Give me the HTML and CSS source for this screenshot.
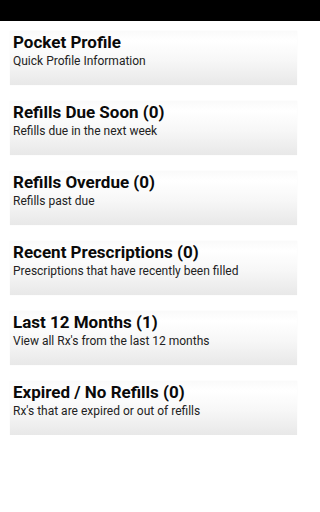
FILE: index.html
```html
<!DOCTYPE html>
<html>
<head>
<meta charset="utf-8">
<link rel="stylesheet" href="styles.css">
</head>
<body>
<div class="status"></div>
<div class="list">
  <div class="card"><div class="title">Pocket Profile</div><div class="sub">Quick Profile Information</div></div>
  <div class="card"><div class="title">Refills Due Soon (0)</div><div class="sub">Refills due in the next week</div></div>
  <div class="card"><div class="title">Refills Overdue (0)</div><div class="sub">Refills past due</div></div>
  <div class="card"><div class="title">Recent Prescriptions (0)</div><div class="sub">Prescriptions that have recently been filled</div></div>
  <div class="card"><div class="title">Last 12 Months (1)</div><div class="sub">View all Rx's from the last 12 months</div></div>
  <div class="card"><div class="title">Expired / No Refills (0)</div><div class="sub">Rx's that are expired or out of refills</div></div>
</div>
</body>
</html>
```
FILE: styles.css
```css
html, body {
  margin: 0;
  padding: 0;
  background: #fff;
  font-family: Roboto, "Liberation Sans", sans-serif;
}
.status {
  height: 21px;
  background: #000;
}
.list {
  width: 308px;
  box-sizing: border-box;
  display: flex;
  flex-direction: column;
  gap: 16px;
  padding: 10px 11px 0 10px;
}
.card {
  height: 54px;
  box-sizing: border-box;
  padding: 1px 3px 0;
  background: linear-gradient(to bottom, #fafafa 0%, #ffffff 18%, #f7f7f7 55%, #e8e8e8 100%);
  box-shadow: 0 0 1px rgba(0,0,0,0.05);
}
.title {
  font-size: 17px;
  font-weight: bold;
  line-height: 20px;
  color: #0a0a0a;
}
.sub {
  margin-top: 2px;
  font-size: 12px;
  line-height: 14px;
  color: #222;
}
```
